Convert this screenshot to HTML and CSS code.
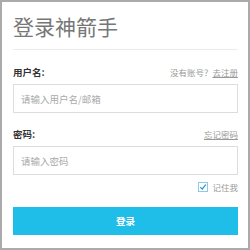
FILE: index.html
```html
<!DOCTYPE html>
<html lang="zh-CN">
<head>
    <meta charset="UTF-8">
    <title>登录神箭手</title>
    <link rel="stylesheet" href="styles.css">
</head>
<body>
    <div class="login-box">
        <h1>登录神箭手</h1>

        <!-- 用户名 -->
        <div class="field-head first">
            <label for="user">用户名:</label>
            <span class="tip">没有账号？<a href="#">去注册</a></span>
        </div>
        <input id="user" class="text-input" type="text" placeholder="请输入用户名/邮箱">

        <!-- 密码 -->
        <div class="field-head">
            <label for="pwd">密码:</label>
            <span class="tip"><a href="#">忘记密码</a></span>
        </div>
        <input id="pwd" class="text-input" type="password" placeholder="请输入密码">

        <div class="remember">
            <span class="check">
                <svg width="10" height="10" viewBox="0 0 10 10">
                    <rect x="0.5" y="0.5" width="9" height="9" fill="#fff" stroke="#8ccbe8"/>
                    <path d="M2.3 5.2 L4.2 7.2 L7.8 2.6" fill="none" stroke="#2a8fd8" stroke-width="1.2"/>
                </svg>
            </span>
            <span>记住我</span>
        </div>

        <button class="btn">登录</button>
    </div>
</body>
</html>
```

FILE: styles.css
```css
* {
    margin: 0;
    padding: 0;
    box-sizing: border-box;
}

body {
    font-family: "Noto Sans CJK SC", "Noto Sans", sans-serif;
    background: #fff;
    color: #333;
}

.login-box {
    width: 250px;
    height: 250px;
    border: 2px solid #aaa;
    padding: 0 10px 0 11px;
    display: flex;
    flex-direction: column;
}

h1 {
    font-size: 21px;
    font-weight: 400;
    color: #777;
    line-height: 30px;
    margin-top: 9px;
    padding-bottom: 8px;
    border-bottom: 1px solid #ececec;
    white-space: nowrap;
}

.field-head {
    display: flex;
    justify-content: space-between;
    align-items: center;
    height: 16px;
    margin-top: 13px;
    margin-bottom: 4px;
}

.field-head.first {
    margin-top: 14px;
}

.field-head label {
    font-size: 9.5px;
    font-weight: 700;
    color: #333;
}

.tip {
    font-size: 8.5px;
    color: #999;
}

.tip a {
    color: #999;
    text-decoration: underline;
}

.text-input {
    display: block;
    width: 100%;
    height: 29px;
    border: 1px solid #ddd;
    padding: 0 7px;
    font-family: inherit;
    font-size: 9.5px;
    color: #333;
    outline: none;
}

.text-input::placeholder {
    color: #aaa;
}

.remember {
    display: flex;
    justify-content: flex-end;
    align-items: center;
    gap: 4px;
    height: 16px;
    margin-top: 4px;
    font-size: 8.5px;
    color: #999;
}

.check {
    display: flex;
}

.btn {
    margin-top: 12px;
    height: 28px;
    width: 100%;
    border: none;
    background: #1ebee8;
    color: #fff;
    font-family: inherit;
    font-size: 9.5px;
    font-weight: 700;
    cursor: pointer;
}
```
